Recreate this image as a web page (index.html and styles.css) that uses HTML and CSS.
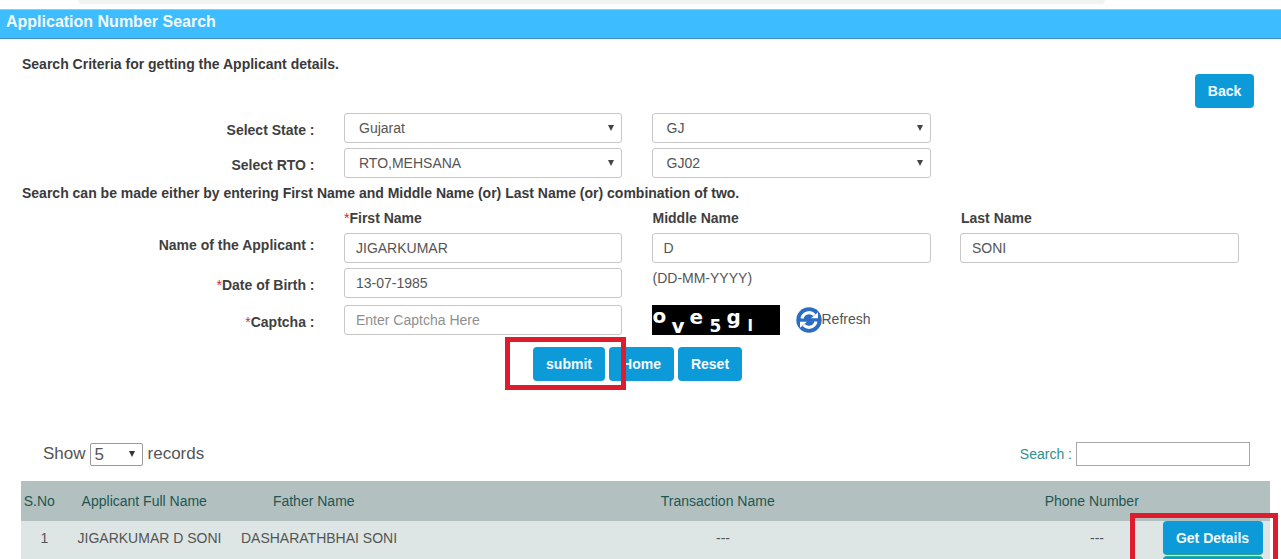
FILE: index.html
```html
<!DOCTYPE html>
<html lang="en">
<head>
<meta charset="utf-8">
<title>Application Number Search</title>
<link rel="stylesheet" href="styles.css">
</head>
<body>
<div class="page">
  <div class="topstrip"><div class="topstrip-bar"></div></div>
  <h1 class="title">Application Number Search</h1>
  <section class="panel">
    <div class="head">
      <p class="strong">Search Criteria for getting the Applicant details.</p>
      <button class="btn back" type="button">Back</button>
    </div>
    <div class="row">
      <label class="lab">Select State :</label>
      <div class="sel"><select><option>Gujarat</option></select></div>
      <div class="sel"><select><option>GJ</option></select></div>
    </div>
    <div class="row mt5">
      <label class="lab">Select RTO :</label>
      <div class="sel"><select><option>RTO,MEHSANA</option></select></div>
      <div class="sel"><select><option>GJ02</option></select></div>
    </div>
    <p class="strong note">Search can be made either by entering First Name and Middle Name (or) Last Name (or) combination of two.</p>
    <div class="row mt5">
      <span></span>
      <span class="colhead"><i class="req">*</i>First Name</span>
      <span class="colhead">Middle Name</span>
      <span class="colhead">Last Name</span>
    </div>
    <div class="row mt5">
      <label class="lab lab-high">Name of the Applicant :</label>
      <input class="inp" type="text" value="JIGARKUMAR">
      <input class="inp" type="text" value="D">
      <input class="inp" type="text" value="SONI">
    </div>
    <div class="row mt5">
      <label class="lab"><i class="req">*</i>Date of Birth :</label>
      <input class="inp" type="text" value="13-07-1985">
      <span class="hint">(DD-MM-YYYY)</span>
    </div>
    <div class="row mt7">
      <label class="lab"><i class="req">*</i>Captcha :</label>
      <input class="inp" type="text" placeholder="Enter Captcha Here">
      <div class="captcha-cell">
        <div class="captcha"><span class="c1">o</span><span class="c2">v</span><span class="c3">e</span><span class="c4">5</span><span class="c5">g</span><span class="c6">l</span></div>
        <svg class="refresh" viewBox="0 0 26 26" aria-hidden="true">
          <circle cx="13" cy="13" r="12.7" fill="#2b6cc4"/>
          <path d="M6 11.5A7.3 7.3 0 0 1 18.4 8" fill="none" stroke="#fff" stroke-width="3.2"/>
          <path d="M15 11.2h7V5.2z" fill="#fff"/>
          <path d="M20 14.5A7.3 7.3 0 0 1 7.6 18" fill="none" stroke="#fff" stroke-width="3.2"/>
          <path d="M11 14.8H4v6z" fill="#fff"/>
        </svg>
        <span class="refresh-text">Refresh</span>
      </div>
    </div>
    <div class="actions">
      <button class="btn submit" type="button">submit</button>
      <button class="btn home" type="button">Home</button>
      <button class="btn reset" type="button">Reset</button>
    </div>
  </section>
  <section class="records">
    <div class="tools">
      <div class="show">Show <span class="mini"><select><option>5</option></select></span> records</div>
      <div class="search"><label>Search :</label><input type="text"></div>
    </div>
    <table class="grid">
      <colgroup>
        <col class="c-sno"><col class="c-name"><col class="c-father"><col class="c-trans"><col class="c-phone"><col class="c-act">
      </colgroup>
      <thead>
        <tr><th>S.No</th><th>Applicant Full Name</th><th>Father Name</th><th>Transaction Name</th><th>Phone Number</th><th></th></tr>
      </thead>
      <tbody>
        <tr>
          <td>1</td><td>JIGARKUMAR D SONI</td><td>DASHARATHBHAI SONI</td><td>---</td><td>---</td>
          <td class="act"><button class="btn details" type="button">Get Details</button><span class="btn-next"></span></td>
        </tr>
      </tbody>
    </table>
  </section>
  <div class="mark mark-submit"></div>
  <div class="mark mark-details"></div>
</div>
</body>
</html>
```
FILE: styles.css
```css
* { box-sizing: border-box; }
html, body { margin: 0; padding: 0; }
body { font-family: "Liberation Sans", Arial, sans-serif; font-size: 14px; color: #555; background: #fff; }
.page { position: relative; width: 1281px; height: 559px; overflow: hidden; }

.topstrip { height: 9px; padding-left: 78px; background: #fff; }
.topstrip-bar { width: 1027px; height: 4px; background: #f1f2f2; border-radius: 0 0 6px 6px; }
.title { margin: 0; height: 30px; padding: 1px 0 0 6px; background: #3dbdff; border-top: 1px solid #7fd0f5; border-bottom: 1px solid #3b8fb8; color: #f2fbff; font-size: 16px; font-weight: bold; line-height: 22px; }

.panel { padding: 0 27px 0 22px; }
.head { display: flex; justify-content: space-between; height: 59px; margin-top: 15px; }
.strong { margin: 0; font-weight: bold; line-height: 20px; color: #3a3a3a; font-size: 14px; }
.note { margin-top: 5px; height: 20px; }

.row { display: grid; grid-template-columns: 292.5px 278px 279px 279px; column-gap: 29.5px; }
.mt5 { margin-top: 5px; }
.mt7 { margin-top: 7px; }
.lab { padding-top: 7px; text-align: right; font-weight: bold; line-height: 20px; color: #3f3f3f; font-size: 14px; }
.lab-high { padding-top: 2px; }
.req { font-style: normal; font-weight: normal; color: #c5303a; }
.colhead { padding-left: 1px; height: 20px; font-weight: bold; line-height: 20px; color: #3f3f3f; font-size: 14px; }
.colhead .req { margin-left: -1px; }

.sel { position: relative; height: 30px; }
.sel select { width: 100%; height: 30px; padding: 0 24px 0 14px; appearance: none; background: #fff; border: 1px solid #c8c8c8; border-radius: 3px; font: 14px "Liberation Sans", Arial, sans-serif; color: #555; }
.sel::after { content: ""; position: absolute; right: 8px; top: 12px; border-left: 3px solid transparent; border-right: 3px solid transparent; border-top: 6px solid #444; }

.inp { width: 100%; height: 30px; padding: 0 11px; background: #fff; border: 1px solid #c8c8c8; border-radius: 3px; font: 14px "Liberation Sans", Arial, sans-serif; color: #555; }
.inp::placeholder { color: #8f8f8f; opacity: 1; }
.hint { padding-left: 1px; line-height: 20px; color: #555; }

.captcha-cell { display: flex; align-items: center; }
.captcha { display: flex; align-items: flex-start; width: 128px; height: 30px; padding-left: 1px; background: #000; color: #fff; font: bold 20px/12px "DejaVu Sans", sans-serif; }
.captcha span { display: block; height: 12px; }
.c1 { width: 19px; margin-top: 5px; }
.c2 { width: 18px; margin-top: 15px; }
.c3 { width: 20px; margin-top: 6px; }
.c4 { width: 17px; margin-top: 15px; font-size: 17px; }
.c5 { width: 21px; margin-top: 6px; }
.c6 { width: 8px; margin-top: 15px; font-size: 16px; }
.refresh { width: 26px; height: 26px; margin-left: 16px; }
.refresh-text { margin-bottom: 3px; color: #555; }

.actions { display: flex; gap: 4px; margin-top: 12px; padding-left: 511px; }
.btn { height: 34px; padding: 0; background: #0d9ad8; border: 0; border-radius: 4px; color: #f4fbff; font: bold 14px "Liberation Sans", Arial, sans-serif; }
.submit { width: 72px; }
.home { width: 65px; }
.reset { width: 64px; }
.back { width: 59px; margin-top: 20px; }

.records { padding: 0 11px 0 21px; margin-top: 61px; }
.tools { display: flex; justify-content: space-between; align-items: center; height: 24px; padding: 0 20px 0 22px; }
.show { display: flex; align-items: center; gap: 4px; font-size: 17px; color: #555; }
.mini { position: relative; display: block; width: 53px; height: 23px; margin-right: 1px; }
.mini select { width: 100%; height: 23px; padding: 0 0 0 4px; appearance: none; background: #fff; border: 1px solid #9a9a9a; border-radius: 2px; font: 17px "Liberation Sans", Arial, sans-serif; color: #555; }
.mini::after { content: ""; position: absolute; right: 8px; top: 8px; border-left: 3px solid transparent; border-right: 3px solid transparent; border-top: 6px solid #333; }
.search { display: flex; align-items: center; gap: 4px; color: #2f8f8c; }
.search input { width: 174px; height: 24px; border: 1px solid #a8a8a8; background: #fff; padding: 0 4px; }

.grid { width: 1249px; margin-top: 15px; table-layout: fixed; border-collapse: collapse; }
.c-sno { width: 47px; }
.c-name { width: 163px; }
.c-father { width: 176px; }
.c-trans { width: 632px; }
.c-phone { width: 116px; }
.c-act { width: 115px; }
.grid th { height: 40px; padding: 0 10.5px 0 0; background: #b2c1c0; color: #1f5652; font-size: 14px; font-weight: normal; text-align: center; white-space: nowrap; }
.grid td { padding: 0; height: 60px; background: #dde6e4; color: #555; text-align: center; vertical-align: top; line-height: 34px; white-space: nowrap; }
.grid td.act { line-height: normal; }
.details { display: block; width: 100px; height: 33px; margin: 0 auto; box-shadow: 0 1px 0 #2aa38f; }
.btn-next { display: block; width: 100px; height: 24px; margin: 2px auto 0; background: #0d9ad8; border-top: 1px solid #23b08f; border-radius: 4px; }

.mark { position: absolute; border: 5px solid #de1c2e; }
.mark-submit { left: 505px; top: 337px; width: 121px; height: 53px; }
.mark-details { left: 1130px; top: 513px; width: 148px; height: 60px; }
```
